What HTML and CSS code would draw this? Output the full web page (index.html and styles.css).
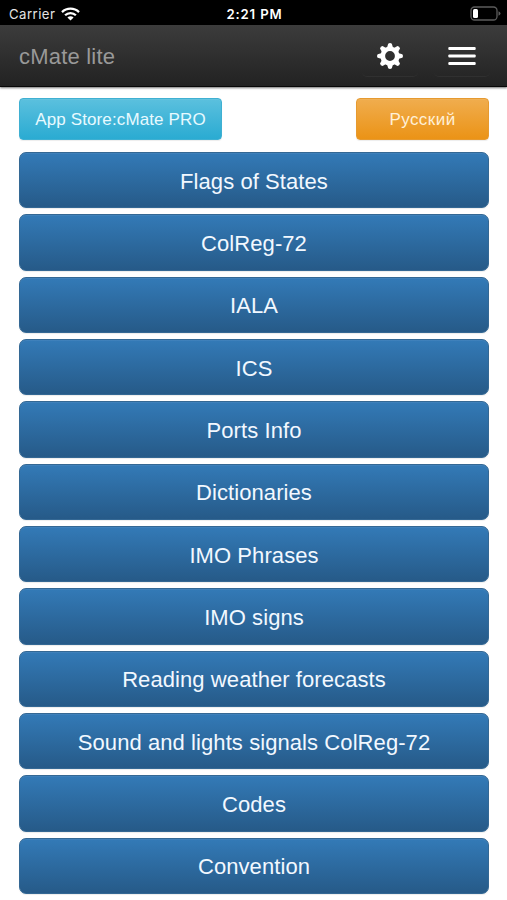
FILE: index.html
```html
<!DOCTYPE html>
<html lang="en">
<head>
<meta charset="utf-8">
<title>cMate lite</title>
<link rel="stylesheet" href="styles.css">
</head>
<body>
<div class="status">
  <div class="carrier"><span>Carrier</span>
    <svg class="wifi" width="19" height="14" viewBox="0 0 19 14" fill="none" stroke="#fff" stroke-width="2.3"><path d="M1 5.1C5.7.5 13.3.5 18 5.1"/><path d="M4.1 8.3C7.1 5.3 11.9 5.3 14.9 8.3"/><path d="M6.4 10.4C8.2 8.7 10.8 8.7 12.6 10.4L9.5 13.6Z" fill="#fff" stroke="none"/></svg>
  </div>
  <div class="time">2:21 PM</div>
  <svg class="battery" width="31" height="15" viewBox="0 0 31 15"><rect x="1" y="1" width="26" height="13" rx="3.5" fill="none" stroke="#5c5c5c" stroke-width="1.3"/><rect x="3" y="3" width="5" height="9" rx="1.5" fill="#fff"/><path d="M28.5 5.2Q30.5 6 30.5 7.5T28.5 9.8Z" fill="#5c5c5c"/></svg>
</div>
<header class="navbar">
  <span class="brand">cMate lite</span>
  <div class="tools">
    <a class="tool"><svg width="26" height="26" viewBox="-13 -13 26 26"><g fill="#fff"><path fill-rule="evenodd" d="M0-9.6A9.6 9.6 0 1 1 0 9.6A9.6 9.6 0 1 1 0-9.6ZM0-4.9A4.9 4.9 0 1 0 0 4.9A4.9 4.9 0 1 0 0-4.9Z"/><path id="tooth" d="M-3.1-8L-1.8-12.3Q0-13.6 1.8-12.3L3.1-8Z"/><use href="#tooth" transform="rotate(45)"/><use href="#tooth" transform="rotate(90)"/><use href="#tooth" transform="rotate(135)"/><use href="#tooth" transform="rotate(180)"/><use href="#tooth" transform="rotate(225)"/><use href="#tooth" transform="rotate(270)"/><use href="#tooth" transform="rotate(315)"/></g></svg></a>
    <a class="tool"><svg width="28" height="20" viewBox="0 0 28 20"><g fill="#fff"><rect x=".3" y="1.1" width="27.4" height="3" rx="1"/><rect x=".3" y="8.5" width="27.4" height="3" rx="1"/><rect x=".3" y="15.9" width="27.4" height="3" rx="1"/></g></svg></a>
  </div>
</header>
<main>
  <div class="top">
    <a class="btn info"><span>App Store:cMate PRO</span></a>
    <a class="btn warning"><span>Русский</span></a>
  </div>
  <nav class="menu">
    <a class="btn primary">Flags of States</a>
    <a class="btn primary">ColReg-72</a>
    <a class="btn primary">IALA</a>
    <a class="btn primary">ICS</a>
    <a class="btn primary">Ports Info</a>
    <a class="btn primary">Dictionaries</a>
    <a class="btn primary">IMO Phrases</a>
    <a class="btn primary">IMO signs</a>
    <a class="btn primary">Reading weather forecasts</a>
    <a class="btn primary">Sound and lights signals ColReg-72</a>
    <a class="btn primary">Codes</a>
    <a class="btn primary">Convention</a>
  </nav>
</main>
</body>
</html>
```
FILE: styles.css
```css
* { box-sizing: border-box; }
body {
  margin: 0;
  height: 900px;
  overflow: hidden;
  background: #fff;
  font-family: "Liberation Sans", Arial, sans-serif;
}
svg { display: block; }
.status {
  display: grid;
  grid-template-columns: 1fr auto 1fr;
  align-items: center;
  height: 25px;
  padding: 2px 6px 0 9px;
  background: #000;
  color: #fff;
  font-family: Inter, sans-serif;
  font-size: 13.2px;
}
.carrier { display: flex; align-items: center; gap: 6px; color: #e4e4e4; letter-spacing: .45px; }
.time { margin-right: 1px; font-weight: 600; letter-spacing: .85px; }
.battery { justify-self: end; margin-top: -1px; }
.navbar {
  display: flex;
  justify-content: space-between;
  align-items: center;
  height: 62px;
  padding: 0 17px 0 19px;
  background: linear-gradient(#3c3c3c, #222);
  border-bottom: 1px solid #080808;
  box-shadow: 0 1px 2px rgba(0, 0, 0, .55);
}
.brand { color: #999; font-size: 22px; letter-spacing: .2px; padding-top: 3px; }
.tools { display: flex; gap: 16px; }
.tool {
  display: flex;
  align-items: center;
  justify-content: center;
  width: 56px;
  height: 42px;
  padding-top: 2px;
  border-radius: 5px;
  border-bottom: 1px solid #303030;
}
main { padding: 11px 18px 0 19px; }
.top { display: flex; justify-content: space-between; margin-bottom: 12px; }
.btn {
  display: flex;
  align-items: center;
  justify-content: center;
  color: #fff;
  white-space: nowrap;
  box-shadow: inset 0 1px 0 rgba(255, 255, 255, .06), 0 1px 1px rgba(0, 0, 0, .075);
}
.top .btn { height: 42px; padding-top: 2px; border-radius: 4px; font-size: 17px; }
.info { width: 203px; color: #e8faff; background: linear-gradient(#5bc0de, #2aabd2); border: 1px solid #3fb0d2; letter-spacing: .12px; }
.warning { width: 133px; color: #fff0d8; background: linear-gradient(#f0ad4e, #eb9316); border: 1px solid #e69a30; letter-spacing: .45px; }
.menu { display: grid; grid-template-rows: repeat(12, 56.4px); row-gap: 5.95px; }
.primary {
  padding-top: 3px;
  border: 1px solid #346894;
  border-radius: 7px;
  background: linear-gradient(#337ab7, #265a88);
  color: #f2f8ff;
  font-size: 22px;
  letter-spacing: .08px;
}
```
